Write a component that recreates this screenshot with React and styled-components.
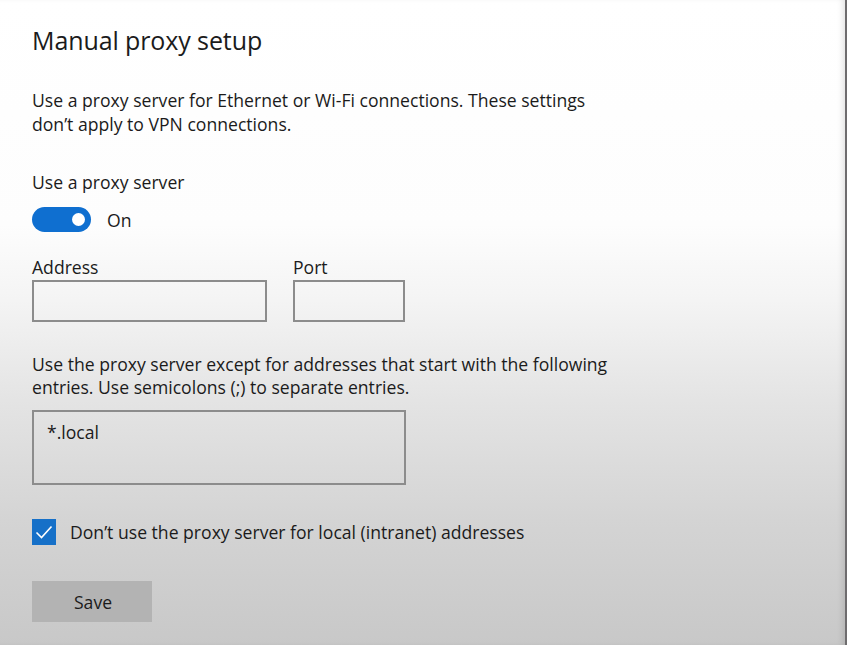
import React from 'react';
import styled, { createGlobalStyle } from 'styled-components';

const GlobalStyle = createGlobalStyle`
    html, body {
        margin: 0;
        padding: 0;
    }
    body {
        font-family: "Open Sans", "Noto Sans", "Liberation Sans", sans-serif;
        color: #1b1b1b;
    }
`;

const Page = styled.div`
    box-sizing: border-box;
    width: 847px;
    height: 645px;
    overflow: hidden;
    padding: 23px 0 0 32px;
    background: linear-gradient(to bottom, #ffffff 0, #fdfdfd 225px, #f4f4f4 300px, #e4e4e4 400px, #d4d4d4 520px, #c8c8c8 645px);
    border-right: 2px solid #6e6c6e;
    box-shadow: inset -5px 0 6px -3px rgba(0, 0, 0, 0.12);
    display: flex;
    flex-direction: column;
    align-items: flex-start;
`;

const Title = styled.h1`
    margin: 0;
    font-size: 25px;
    font-weight: 400;
    line-height: 34px;
    letter-spacing: -0.1px;
`;

const Text = styled.p`
    margin: ${p => p.$top || 0}px 0 0;
    font-size: 17.6px;
    line-height: ${p => p.$lh || 24}px;
    width: ${p => p.$width || 600}px;
`;

const ToggleRow = styled.div`
    display: flex;
    align-items: center;
    gap: 16px;
    margin-top: 13px;
    font-size: 17.6px;
`;

const Toggle = styled.span`
    box-sizing: border-box;
    width: 59px;
    height: 25px;
    border-radius: 13px;
    background: #0f6fd0;
    display: flex;
    align-items: center;
    justify-content: flex-end;
    padding-right: 6px;

    &::after {
        content: '';
        width: 13px;
        height: 13px;
        border-radius: 50%;
        background: #ffffff;
    }
`;

const FieldRow = styled.div`
    display: flex;
    gap: 26px;
    margin-top: 23px;
`;

const Field = styled.label`
    display: flex;
    flex-direction: column;
    font-size: 17.6px;
    line-height: 25px;
`;

const Input = styled.div`
    box-sizing: border-box;
    width: ${p => p.$width}px;
    height: ${p => p.$height || 42}px;
    border: 2px solid #8c8c8c;
    padding: 9px 13px;
    font-size: 17.6px;
    line-height: 22px;
`;

const CheckRow = styled.div`
    display: flex;
    align-items: center;
    gap: 14px;
    margin-top: 34px;
    font-size: 17.6px;
`;

const Checkbox = styled.span`
    width: 24px;
    height: 26px;
    background: #1670c8;
    display: flex;
    align-items: center;
    justify-content: center;
`;

const SaveButton = styled.button`
    margin-top: 36px;
    width: 120px;
    height: 41px;
    border: none;
    background: #b3b3b3;
    font-family: inherit;
    font-size: 17.6px;
    color: #1b1b1b;
    padding: 0 0 0 2px;
`;

export default function App() {
    return (
        <Page>
            <GlobalStyle />
            <Title>Manual proxy setup</Title>
            <Text $top={31} $width={592}>
                Use a proxy server for Ethernet or Wi-Fi connections. These settings don’t apply to VPN connections.
            </Text>
            <Text $top={34}>Use a proxy server</Text>
            <ToggleRow>
                <Toggle />
                <span>On</span>
            </ToggleRow>
            <FieldRow>
                <Field>
                    Address
                    <Input $width={235} />
                </Field>
                <Field>
                    Port
                    <Input $width={112} />
                </Field>
            </FieldRow>
            <Text $top={31} $lh={23} $width={615}>
                Use the proxy server except for addresses that start with the following entries. Use semicolons (;) to separate entries.
            </Text>
            <Input $width={374} $height={75} style={{ marginTop: 11 }}>*.local</Input>
            <CheckRow>
                <Checkbox>
                    <svg width="18" height="14" viewBox="0 0 18 14">
                        <path d="M1.5 7.5 L6.5 12.5 L16.5 1.5" fill="none" stroke="#fff" strokeWidth="1.6" />
                    </svg>
                </Checkbox>
                <span>Don’t use the proxy server for local (intranet) addresses</span>
            </CheckRow>
            <SaveButton>Save</SaveButton>
        </Page>
    );
}
